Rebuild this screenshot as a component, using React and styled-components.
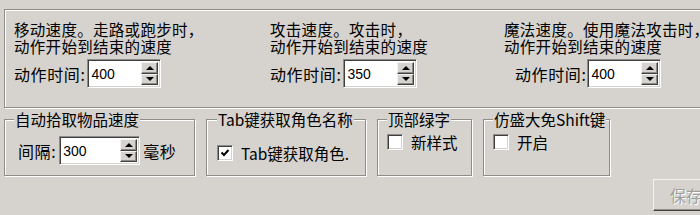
import React from "react";
import styled, { createGlobalStyle } from "styled-components";

const Global = createGlobalStyle`
  html, body { margin: 0; padding: 0; background: #d6d3ce; }
  body { width: 700px; height: 215px; overflow: hidden;
    font-family: "Noto Sans CJK SC", "Noto Sans", sans-serif; color: #000; }
`;

const Page = styled.div`
  width: 700px;
  height: 215px;
  overflow: hidden;
  padding: 9px 0 0 4px;
  box-sizing: border-box;
`;

const TopPanel = styled.div`
  width: 720px;
  height: 99px;
  box-sizing: border-box;
  border: 1px solid #8e8c88;
  box-shadow: inset 1px 1px #fff, 1px 1px #fff;
  padding: 11px 0 0 9px;
  display: grid;
  grid-template-columns: 256px 234px 1fr;
`;

const Column = styled.div`
  display: flex;
  flex-direction: column;
`;

const Desc = styled.div`
  font-size: 15.5px;
  line-height: 17px;
  letter-spacing: 0.3px;
  white-space: nowrap;
  height: 38px;
`;

const Row = styled.div`
  display: flex;
  align-items: center;
  padding-left: ${(p) => p.$indent || 0}px;
  margin-top: ${(p) => p.$top || 0}px;
`;

const Label = styled.span`
  font-size: 16px;
  letter-spacing: 0.6px;
  white-space: nowrap;
  margin-right: ${(p) => p.$gap || 2}px;
  margin-left: ${(p) => p.$ml || 0}px;
`;

const Field = styled.div`
  width: ${(p) => p.$w}px;
  height: 29px;
  box-sizing: border-box;
  background: #fff;
  border: 1px solid;
  border-color: #8e8c88 #fff #fff #8e8c88;
  box-shadow: inset 1px 1px #404040, inset -1px -1px #d6d3ce;
  display: flex;
  align-items: center;
  padding: 2px 2px 2px 3px;
`;

const Value = styled.span`
  flex: 1;
  font-family: "Liberation Sans", Arial, sans-serif;
  font-size: 14px;
`;

const Spinner = styled.div`
  width: 17px;
  height: 100%;
  display: flex;
  flex-direction: column;
`;

const SpinBtn = styled.div`
  flex: 1;
  background: #d6d3ce;
  box-sizing: border-box;
  border: 1px solid;
  border-color: #f4f3f1 #404040 #404040 #f4f3f1;
  box-shadow: inset -1px -1px #8e8c88;
  display: flex;
  align-items: center;
  justify-content: center;
`;

const Arrow = styled.div`
  width: 0;
  height: 0;
  border-left: 4px solid transparent;
  border-right: 4px solid transparent;
  ${(p) => (p.$down ? "border-top: 4px solid #000;" : "border-bottom: 4px solid #000;")}
`;

const Spin = ({ value, w = 74 }) => (
  <Field $w={w}>
    <Value>{value}</Value>
    <Spinner>
      <SpinBtn><Arrow /></SpinBtn>
      <SpinBtn><Arrow $down /></SpinBtn>
    </Spinner>
  </Field>
);

const Groups = styled.div`
  display: flex;
  gap: 11px;
  margin-top: 3px;
`;

const Group = styled.fieldset`
  margin: 0;
  width: ${(p) => p.$w}px;
  height: 65px;
  box-sizing: border-box;
  border: 1px solid #8e8c88;
  box-shadow: inset 1px 1px #fff, 1px 1px #fff;
  padding: 0 0 0 ${(p) => p.$pl}px;
  display: flex;
  flex-direction: column;
`;

const Legend = styled.legend`
  font-size: 15.5px;
  line-height: 17px;
  padding: 0 1px;
  margin-left: ${(p) => p.$ml}px;
  background: #d6d3ce;
  white-space: nowrap;
`;

const CheckRow = styled.div`
  display: flex;
  align-items: center;
  margin-top: ${(p) => p.$top}px;
`;

const Box = styled.div`
  width: 16px;
  height: 16px;
  box-sizing: border-box;
  background: #fff;
  border: 1px solid;
  border-color: #8e8c88 #fff #fff #8e8c88;
  box-shadow: inset 1px 1px #404040, inset -1px -1px #d6d3ce;
  display: flex;
  align-items: center;
  justify-content: center;
  margin-right: 8px;
`;

const CheckText = styled.span`
  font-size: 15.5px;
  white-space: nowrap;
`;

const Check = ({ checked, children, top }) => (
  <CheckRow $top={top}>
    <Box>
      {checked && (
        <svg width="10" height="10" viewBox="0 0 10 10">
          <path d="M1.5 4.5 L4 7 L8.5 2" fill="none" stroke="#000" strokeWidth="2" />
        </svg>
      )}
    </Box>
    <CheckText>{children}</CheckText>
  </CheckRow>
);

const Footer = styled.div`
  display: flex;
  justify-content: flex-end;
  margin-top: 3px;
  margin-right: -20px;
`;

const SaveBtn = styled.div`
  width: 67px;
  height: 32px;
  box-sizing: border-box;
  border: 1px solid;
  border-color: #f4f3f1 #404040 #404040 #f4f3f1;
  box-shadow: inset -1px -1px #8e8c88;
  display: flex;
  align-items: center;
  padding-left: 16px;
  font-size: 16px;
  color: #a09e9a;
  text-shadow: 1px 1px #fff;
`;

export default function App() {
  return (
    <>
      <Global />
      <Page>
        <TopPanel>
          <Column>
            <Desc>移动速度。走路或跑步时，<br />动作开始到结束的速度</Desc>
            <Row><Label>动作时间:</Label><Spin value="400" /></Row>
          </Column>
          <Column>
            <Desc>攻击速度。攻击时，<br />动作开始到结束的速度</Desc>
            <Row><Label>动作时间:</Label><Spin value="350" /></Row>
          </Column>
          <Column>
            <Desc>魔法速度。使用魔法攻击时，<br />动作开始到结束的速度</Desc>
            <Row $indent={11}><Label $gap={1}>动作时间:</Label><Spin value="400" /></Row>
          </Column>
        </TopPanel>
        <Groups>
          <Group $w={191} $pl={0}>
            <Legend $ml={9}>自动拾取物品速度</Legend>
            <Row $top={8} $indent={13}>
              <Label $gap={3}>间隔:</Label>
              <Spin value="300" w={81} />
              <Label $ml={3}>毫秒</Label>
            </Row>
          </Group>
          <Group $w={160} $pl={10}>
            <Legend $ml={0}>Tab键获取角色名称</Legend>
            <Check checked top={14}>Tab键获取角色.</Check>
          </Group>
          <Group $w={95} $pl={9}>
            <Legend $ml={0}>顶部绿字</Legend>
            <Check top={3}>新样式</Check>
          </Group>
          <Group $w={127} $pl={9}>
            <Legend $ml={0}>仿盛大免Shift键</Legend>
            <Check top={3}>开启</Check>
          </Group>
        </Groups>
        <Footer><SaveBtn>保存</SaveBtn></Footer>
      </Page>
    </>
  );
}
